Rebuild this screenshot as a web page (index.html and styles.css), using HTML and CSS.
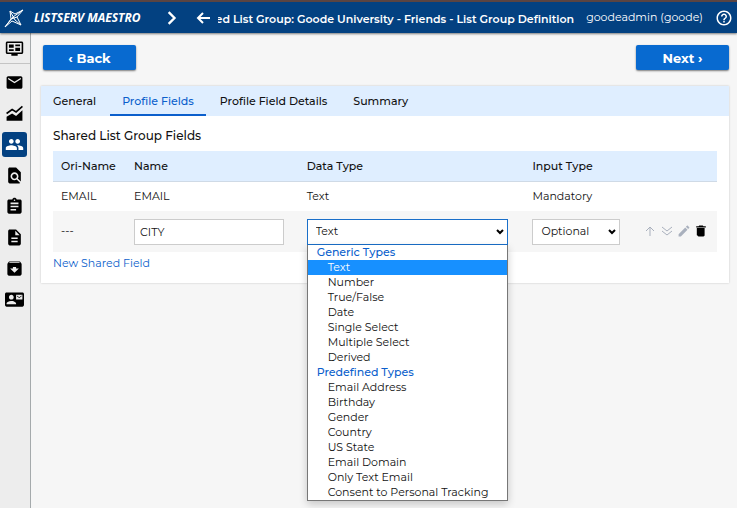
FILE: index.html
```html
<!DOCTYPE html>
<html lang="en">
<head>
    <meta charset="UTF-8">
    <title>LISTSERV Maestro</title>
    <link rel="stylesheet" href="styles.css">
</head>
<body>
<header class="topbar">
    <a class="brand" href="#">
        <svg class="logo" viewBox="0 0 20 20"><path d="M1 19L8 13L17 17L13 9L19 2L11 6L6 3L7 11zM6 3L11 12L17 17M19 2L9 9L1 19M7 11L13 9"/></svg>
        <span>LISTSERV MAESTRO</span>
    </a>
    <svg class="crumb" viewBox="0 0 12 12"><path d="M4 1l5 5-5 5"/></svg>
    <a class="back-link" href="#" aria-label="Go back"><svg viewBox="0 0 14 12"><path d="M14 6H2M7 1L2 6l5 5"/></svg></a>
    <div class="page-title"><span>Selected List Group: Goode University - Friends - List Group Definition</span></div>
    <span class="user">goodeadmin (goode)</span>
    <a class="help" href="#" aria-label="Help"><svg viewBox="0 0 24 24"><path d="M11 18h2v-2h-2v2zm1-16C6.480 2 2 6.480 2 12s4.480 10 10 10 10-4.480 10-10S17.520 2 12 2zm0 18c-4.410 0-8-3.590-8-8s3.590-8 8-8 8 3.590 8 8-3.590 8-8 8zm0-14c-2.210 0-4 1.790-4 4h2c0-1.100.9-2 2-2s2 .9 2 2c0 2-3 1.750-3 5h2c0-2.250 3-2.500 3-5 0-2.210-1.790-4-4-4z"/></svg></a>
</header>
<div class="shell">
    <nav class="sidebar">
        <a class="first" href="#" aria-label="Dashboard"><svg viewBox="0 0 24 24"><path fill-rule="evenodd" d="M3 3h18c1.100 0 2 .9 2 2v12c0 1.100-.9 2-2 2h-5v2H8v-2H3c-1.100 0-2-.9-2-2V5c0-1.100.9-2 2-2zm0 2v12h18V5zM5 7h6v4H5zm0 6h6v2H5zm8-6h6v2h-6zm0 4h6v4h-6z"/></svg></a>
        <a href="#" aria-label="Mail"><svg viewBox="0 0 24 24"><path d="M20 4H4c-1.100 0-1.990.9-1.990 2L2 18c0 1.100.9 2 2 2h16c1.100 0 2-.9 2-2V6c0-1.100-.9-2-2-2zm0 4l-8 5-8-5V6l8 5 8-5v2z"/></svg></a>
        <a href="#" aria-label="Reports"><svg viewBox="0 0 24 24"><path d="M2 21v-5l7-4 5 3 8-7v13z"/><path class="trend" d="M2 12l7-5 5 3 8-7"/></svg></a>
        <a class="active" href="#" aria-label="Recipients"><svg viewBox="0 0 24 24"><path d="M16 11c1.660 0 2.990-1.340 2.990-3S17.660 5 16 5c-1.660 0-3 1.340-3 3s1.340 3 3 3zm-8 0c1.660 0 2.990-1.340 2.990-3S9.660 5 8 5C6.340 5 5 6.340 5 8s1.340 3 3 3zm0 2c-2.330 0-7 1.170-7 3.500V19h14v-2.500c0-2.330-4.670-3.500-7-3.500zm8 0c-.29 0-.62.02-.97.05 1.160.84 1.970 1.970 1.970 3.450V19h6v-2.500c0-2.330-4.670-3.500-7-3.500z"/></svg></a>
        <a href="#" aria-label="Find"><svg viewBox="0 0 24 24"><path d="M20 19.590V8l-6-6H6c-1.100 0-1.990.9-1.990 2L4 20c0 1.100.89 2 1.990 2H18c.45 0 .85-.15 1.190-.4l-4.430-4.430c-.8.52-1.740.83-2.760.83-2.760 0-5-2.240-5-5s2.240-5 5-5 5 2.240 5 5c0 1.020-.31 1.960-.83 2.750L20 19.590zM9 13c0 1.660 1.340 3 3 3s3-1.340 3-3-1.340-3-3-3-3 1.340-3 3z"/></svg></a>
        <a href="#" aria-label="Tasks"><svg viewBox="0 0 24 24"><path d="M19 3h-4.180C14.400 1.840 13.300 1 12 1c-1.300 0-2.400.84-2.820 2H5c-1.100 0-2 .9-2 2v14c0 1.100.9 2 2 2h14c1.100 0 2-.9 2-2V5c0-1.100-.9-2-2-2zm-7 0c.55 0 1 .45 1 1s-.45 1-1 1-1-.45-1-1 .45-1 1-1zm2 14H7v-2h7v2zm3-4H7v-2h10v2zm0-4H7V7h10v2z"/></svg></a>
        <a href="#" aria-label="Content"><svg viewBox="0 0 24 24"><path d="M14 2H6c-1.100 0-1.990.9-1.990 2L4 20c0 1.100.89 2 1.990 2H18c1.100 0 2-.9 2-2V8l-6-6zm2 16H8v-2h8v2zm0-4H8v-2h8v2zm-3-5V3.500L18.500 9H13z"/></svg></a>
        <a href="#" aria-label="Archive"><svg viewBox="0 0 24 24"><path d="M20.540 5.230l-1.390-1.680C18.880 3.210 18.470 3 18 3H6c-.47 0-.88.21-1.160.55L3.460 5.230C3.170 5.570 3 6.020 3 6.500V19c0 1.100.9 2 2 2h14c1.100 0 2-.9 2-2V6.500c0-.48-.17-.93-.46-1.270zM12 17.500L6.500 12H10v-2h4v2h3.500L12 17.500zM5.120 5l.81-1h12l.94 1H5.120z"/></svg></a>
        <a href="#" aria-label="Contacts"><svg viewBox="0 0 24 24"><path d="M21 8V7l-3 2-3-2v1l3 2 3-2zm1-5H2C.9 3 0 3.900 0 5v14c0 1.100.9 2 2 2h20c1.100 0 1.990-.9 1.990-2L24 5c0-1.100-.9-2-2-2zM8 6c1.660 0 3 1.340 3 3s-1.340 3-3 3-3-1.340-3-3 1.340-3 3-3zm6 12H2v-1c0-2 4-3.100 6-3.100s6 1.100 6 3.100v1zm8-6h-8V6h8v6z"/></svg></a>
    </nav>
    <main class="content">
        <div class="wizard-nav">
            <button class="btn" type="button">‹ Back</button>
            <button class="btn" type="button">Next ›</button>
        </div>
        <section class="card">
            <nav class="tabs">
                <a href="#">General</a>
                <a class="current" href="#">Profile Fields</a>
                <a href="#">Profile Field Details</a>
                <a href="#">Summary</a>
            </nav>
            <div class="card-body">
                <h2>Shared List Group Fields</h2>
                <table class="fields">
                    <colgroup><col class="c-ori"><col class="c-name"><col class="c-data"><col class="c-input"><col class="c-tools"></colgroup>
                    <thead>
                        <tr><th>Ori-Name</th><th>Name</th><th>Data Type</th><th>Input Type</th><th></th></tr>
                    </thead>
                    <tbody>
                        <tr><td>EMAIL</td><td>EMAIL</td><td>Text</td><td>Mandatory</td><td></td></tr>
                        <tr class="edit">
                            <td>---</td>
                            <td><input class="field" type="text" value="CITY" aria-label="Name"></td>
                            <td>
                                <div class="dropdown">
                                    <select class="field open" aria-label="Data Type"><option>Text</option></select>
                                    <div class="menu" role="listbox" aria-label="Data Type">
                                        <div class="group">Generic Types</div>
                                        <div class="item selected" role="option" aria-selected="true">Text</div>
                                        <div class="item" role="option">Number</div>
                                        <div class="item" role="option">True/False</div>
                                        <div class="item" role="option">Date</div>
                                        <div class="item" role="option">Single Select</div>
                                        <div class="item" role="option">Multiple Select</div>
                                        <div class="item" role="option">Derived</div>
                                        <div class="group">Predefined Types</div>
                                        <div class="item" role="option">Email Address</div>
                                        <div class="item" role="option">Birthday</div>
                                        <div class="item" role="option">Gender</div>
                                        <div class="item" role="option">Country</div>
                                        <div class="item" role="option">US State</div>
                                        <div class="item" role="option">Email Domain</div>
                                        <div class="item" role="option">Only Text Email</div>
                                        <div class="item" role="option">Consent to Personal Tracking</div>
                                    </div>
                                    <svg class="caret" viewBox="0 0 8 6"><path d="M1 1l3 3 3-3"/></svg>
                                </div>
                            </td>
                            <td>
                                <div class="dropdown small">
                                    <select class="field" aria-label="Input Type"><option>Optional</option><option>Mandatory</option></select>
                                    <svg class="caret" viewBox="0 0 8 6"><path d="M1 1l3 3 3-3"/></svg>
                                </div>
                            </td>
                            <td>
                                <div class="tools">
                                    <button type="button" aria-label="Move up"><svg viewBox="0 0 12 12"><path class="line" d="M6 11V2M2 6l4-4 4 4"/></svg></button>
                                    <button type="button" aria-label="Move to bottom"><svg viewBox="0 0 12 12"><path class="line" d="M1 2l5 4 5-4M1 6l5 4 5-4"/></svg></button>
                                    <button type="button" aria-label="Edit"><svg viewBox="2 2 20 20"><path d="M3 17.250V21h3.750L17.810 9.940l-3.750-3.750L3 17.250zM20.710 7.040c.39-.39.39-1.020 0-1.410l-2.340-2.340c-.39-.39-1.020-.39-1.410 0l-1.830 1.830 3.750 3.750 1.830-1.830z"/></svg></button>
                                    <button class="delete" type="button" aria-label="Delete"><svg viewBox="2 2 20 20"><path d="M6 19c0 1.100.9 2 2 2h8c1.100 0 2-.9 2-2V7H5v12zM20 4h-4l-1-1H9L8 4H4v2h16V4z"/></svg></button>
                                </div>
                            </td>
                        </tr>
                    </tbody>
                </table>
                <a class="new-field" href="#">New Shared Field</a>
            </div>
        </section>
    </main>
</div>
</body>
</html>
```
FILE: styles.css
```css
* {
    box-sizing: border-box;
}
body {
    margin: 0;
    min-height: 100vh;
    display: flex;
    flex-direction: column;
    background: #f6f6f6;
    color: #111;
    font: 11px/15px Montserrat, Inter, sans-serif;
}
a {
    color: inherit;
    text-decoration: none;
}
svg {
    display: block;
    fill: currentColor;
}
h2 {
    margin: 0;
    font-size: 12px;
    font-weight: 500;
    line-height: 16px;
}

.topbar {
    position: relative;
    z-index: 1;
    display: flex;
    align-items: center;
    height: 33px;
    padding: 0 4px;
    border-top: 2px solid #5a4442;
    background: #034181;
    color: #fff;
    box-shadow: 0 1px 2px rgba(0,0,0,0.5);
}
.brand {
    display: flex;
    align-items: center;
    gap: 10px;
    font: italic bold 12px/16px "Open Sans", sans-serif;
    white-space: nowrap;
}
.logo {
    width: 20px;
    height: 20px;
    fill: none;
    stroke: #fff;
}
.crumb {
    width: 14px;
    height: 14px;
    margin: 0 18px 0 23px;
    fill: none;
    stroke: #fff;
    stroke-width: 2;
}
.back-link svg {
    width: 14px;
    height: 12px;
    fill: none;
    stroke: #fff;
    stroke-width: 2;
}
.page-title {
    flex: 1;
    min-width: 0;
    display: flex;
    justify-content: flex-end;
    margin: 4px 12px 0 8px;
    overflow: hidden;
    white-space: nowrap;
    font-weight: 600;
}
.user {
    white-space: nowrap;
}
.help {
    margin-left: 12px;
}
.help svg {
    width: 18px;
    height: 18px;
}

.shell {
    flex: 1;
    display: flex;
}
.sidebar {
    flex: none;
    width: 31px;
    display: flex;
    flex-direction: column;
    gap: 6px;
    border-right: 1px solid #a5aaac;
    background: #ededed;
}
.sidebar a {
    display: flex;
    align-items: center;
    justify-content: center;
    width: 25px;
    height: 25px;
    margin-left: 2px;
    border-radius: 3px;
    color: #000;
}
.sidebar svg {
    width: 19px;
    height: 19px;
}
.sidebar .first {
    width: 30px;
    height: 31px;
    margin-left: 0;
    padding-right: 2px;
    border-bottom: 1px solid #c4c4c4;
    border-radius: 0;
}
.sidebar .active {
    background: #034181;
    color: #fff;
}
.trend {
    fill: none;
    stroke: currentColor;
    stroke-width: 2;
}

.content {
    flex: 1;
    min-width: 0;
    padding: 12px 8px 12px 10px;
}
.wizard-nav {
    display: flex;
    justify-content: space-between;
    margin: 0 0 16px 2px;
}
.btn {
    width: 93px;
    height: 25px;
    padding: 0;
    border: 0;
    border-radius: 2px;
    background: #086ad0;
    color: #fff;
    font: 700 13px/16px Montserrat, Inter, sans-serif;
    box-shadow: 0 1px 2px rgba(0,0,0,0.5);
}

.card {
    background: #fff;
    box-shadow: 0 0 2px rgba(0,0,0,0.2);
}
.tabs {
    display: flex;
    gap: 2px;
    height: 30px;
    background: #dfeeff;
    font-weight: 500;
}
.tabs a {
    display: flex;
    align-items: center;
    padding: 3px 12px 0;
    border-bottom: 2px solid transparent;
    white-space: nowrap;
}
.tabs .current {
    border-color: #0b5fcc;
    color: #0b5fcc;
}
.card-body {
    padding: 12px;
}

.fields {
    width: 100%;
    margin: 7px 0 4px;
    table-layout: fixed;
    border-collapse: collapse;
}
.c-ori {
    width: 11%;
}
.c-name {
    width: 26%;
}
.c-data {
    width: 34%;
}
.c-input {
    width: 17%;
}
.c-tools {
    width: 12%;
}
.fields th,
.fields td {
    height: 30px;
    padding: 0 8px;
    text-align: left;
    font-weight: 400;
}
.fields th {
    padding-top: 1px;
    border-bottom: 1px solid #cfdae6;
    background: #dfeeff;
    font-weight: 500;
}
.fields .edit td {
    height: 41px;
    background: #f6f6f6;
}
.field {
    display: block;
    width: 100%;
    height: 26px;
    padding: 0 5px;
    border: 1px solid #ccc;
    border-radius: 0;
    background: #fff;
    color: #111;
    font: inherit;
    appearance: none;
}
input.field {
    width: 96%;
}
.field.open {
    border-color: #1a6fc9;
    outline: 0;
}
.dropdown {
    position: relative;
    width: 96%;
}
.dropdown .field {
    padding: 0 8px;
}
.dropdown.small {
    width: 90%;
}
.caret {
    position: absolute;
    top: 10px;
    right: 4px;
    width: 8px;
    height: 6px;
    fill: none;
    stroke: #000;
    stroke-width: 2;
    pointer-events: none;
}
.menu {
    position: absolute;
    z-index: 2;
    top: 26px;
    left: 0;
    width: 100%;
    border: 1px solid #777;
    border-top: 0;
    background: #fff;
    box-shadow: 0 3px 8px rgba(0,0,0,0.2);
    white-space: nowrap;
}
.menu .group {
    padding-left: 9px;
    color: #0b5fcc;
    font-weight: 500;
}
.menu .item {
    padding-left: 20px;
}
.menu .selected {
    background: #1790ff;
    color: #fff;
}
.tools {
    display: flex;
    justify-content: flex-end;
    gap: 5px;
    padding: 0 2px 2px 0;
}
.tools button {
    padding: 0;
    border: 0;
    background: none;
    color: #a9b0bd;
}
.tools .delete {
    color: #000;
}
.tools svg {
    width: 12px;
    height: 12px;
}
.line {
    fill: none;
    stroke: currentColor;
}
.new-field {
    color: #0b5fcc;
}
```
